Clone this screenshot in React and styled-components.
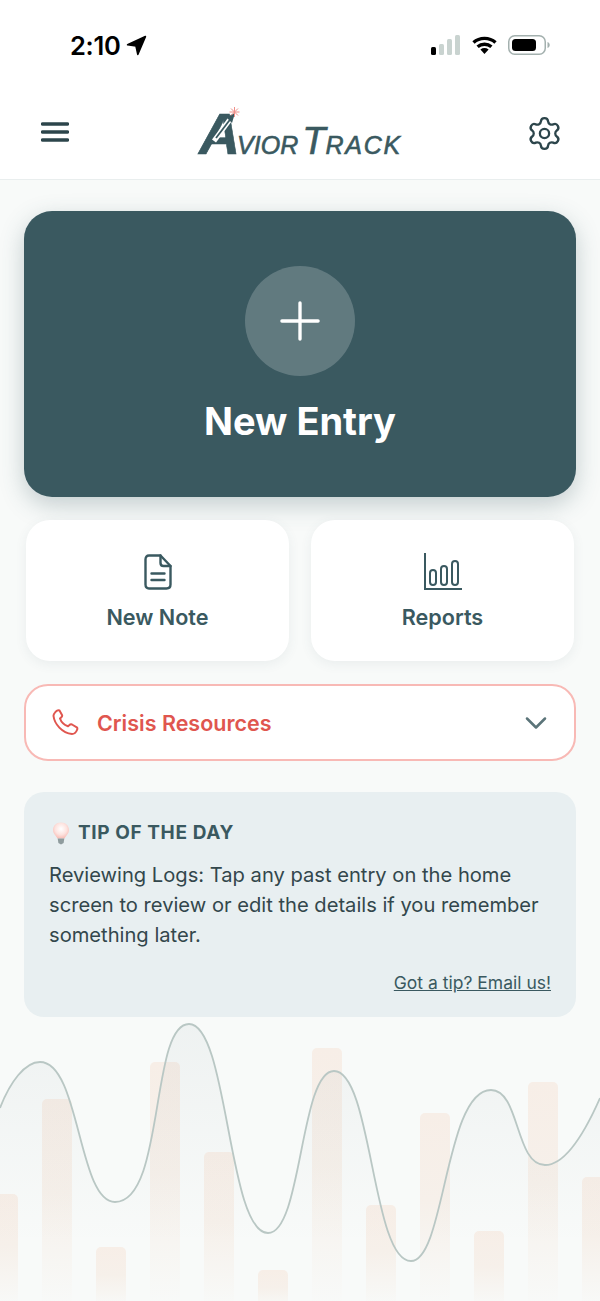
import styled, { createGlobalStyle } from 'styled-components'
import { Settings, Plus, ChevronDown } from 'lucide-react'

const ink = '#3a5960'
const inkDark = '#2c454b'
const coral = '#e0564f'

const GlobalStyle = createGlobalStyle`
  html, body {
    margin: 0;
    padding: 0;
    background: #f8faf9;
    font-family: Inter, "Liberation Sans", sans-serif;
  }
  * { box-sizing: border-box; }
`

const Page = styled.div`
  position: relative;
  width: 600px;
  height: 1301px;
  overflow: hidden;
  background: #f8faf9;
`

const TopArea = styled.div`
  background: #fff;
  border-bottom: 1px solid #e9eeee;
`

const StatusBar = styled.div`
  height: 90px;
  display: flex;
  align-items: center;
  justify-content: space-between;
  padding: 0 50px 0 70px;
`

const Time = styled.div`
  display: flex;
  align-items: center;
  gap: 6px;
  font-size: 25.5px;
  font-weight: 600;
  color: #000;
  letter-spacing: -0.3px;
`

const StatusIcons = styled.div`
  display: flex;
  align-items: center;
  gap: 11px;
`

const Header = styled.header`
  height: 89px;
  display: flex;
  align-items: flex-start;
  justify-content: space-between;
  padding: 18px 37px 0 41px;
`

const IconButton = styled.button`
  border: 0;
  padding: 0;
  background: none;
  color: ${inkDark};
  display: flex;
  margin-top: ${p => p.$top || 0}px;
`

const Logo = styled.div`
  position: relative;
  display: flex;
  align-items: baseline;
  height: 46px;
  margin: 3px 0 0 6px;
  font-family: "Liberation Sans", Arial, sans-serif;
  font-style: italic;
  color: ${ink};
  line-height: 46px;
  -webkit-text-stroke: 0.6px ${ink};
`

const LogoPart = styled.span`
  font-size: ${p => p.$size}px;
  font-weight: ${p => p.$weight || 400};
  letter-spacing: ${p => p.$spacing || 0}px;
  margin-left: ${p => p.$left || 0}px;
  margin-right: ${p => p.$gap || 0}px;
`

const LogoArrow = styled.svg`
  position: absolute;
  left: 0;
  top: 0;
  overflow: visible;
`

const Main = styled.main`
  position: relative;
  display: flex;
  flex-direction: column;
  padding: 31px 24px 0;
`

const Hero = styled.button`
  height: 286px;
  border: 0;
  border-radius: 28px;
  background: ${ink};
  color: #fff;
  display: flex;
  flex-direction: column;
  align-items: center;
  font-family: inherit;
  padding-top: 55px;
  box-shadow: 0 8px 24px rgba(59, 90, 97, 0.28);
`

const PlusCircle = styled.div`
  width: 110px;
  height: 110px;
  border-radius: 50%;
  background: rgba(255, 255, 255, 0.2);
  display: flex;
  align-items: center;
  justify-content: center;
`

const HeroLabel = styled.div`
  margin-top: 22px;
  font-size: 38px;
  line-height: 46px;
  font-weight: 700;
`

const TileRow = styled.div`
  display: grid;
  grid-template-columns: 1fr 1fr;
  gap: 22px;
  padding: 0 2px;
  margin-top: 23px;
`

const Tile = styled.button`
  height: 141px;
  border: 0;
  border-radius: 24px;
  background: #fff;
  color: ${ink};
  font-family: inherit;
  display: flex;
  flex-direction: column;
  align-items: center;
  padding-top: 33px;
  box-shadow: 0 3px 12px rgba(59, 90, 97, 0.08);
`

const TileIcon = styled.div`
  height: 37px;
  display: flex;
  align-items: center;
`

const TileLabel = styled.div`
  margin-top: 12px;
  font-size: 21.6px;
  line-height: 30px;
  font-weight: 600;
`

const Crisis = styled.button`
  height: 77px;
  margin-top: 23px;
  border: 2px solid #f8b9b5;
  border-radius: 24px;
  background: #fff;
  font-family: inherit;
  display: flex;
  align-items: center;
  padding: 0 20px 0 26px;
`

const CrisisLabel = styled.span`
  flex: 1;
  text-align: left;
  margin-left: 18px;
  font-size: 21.5px;
  font-weight: 600;
  color: ${coral};
`

const TipCard = styled.section`
  height: 225px;
  margin-top: 31px;
  padding: 29px 25px 0 25px;
  border-radius: 20px;
  background: #e8eff1;
`

const TipHeading = styled.div`
  display: flex;
  align-items: center;
  gap: 8px;
  padding-left: 3px;
  font-size: 19px;
  line-height: 24px;
  font-weight: 700;
  letter-spacing: 0.6px;
  color: ${ink};
`

const TipBody = styled.p`
  margin: 15px 0 0;
  font-size: 20.15px;
  line-height: 30px;
  color: #33474c;
`

const TipLink = styled.a`
  display: block;
  margin-top: 21px;
  text-align: right;
  font-size: 17.5px;
  line-height: 24px;
  color: ${ink};
  text-decoration: underline;
`

const Backdrop = styled.svg`
  position: absolute;
  left: 0;
  bottom: 0;
`

const bars = [
  [-12, 174], [42, 79], [96, 227], [150, 42], [204, 132], [258, 250],
  [312, 28], [366, 185], [420, 93], [474, 211], [528, 62], [582, 157],
]

const wave = 'M0 88C10 62 25 42 40 42C80 42 78 182 115 182C165 182 150 4 189 4C228 4 228 213 268 213C302 213 300 51 334 51C372 51 372 241 411 241C445 241 445 70 491 70C520 70 515 145 545 145C565 145 585 112 600 78'

function Chart() {
  return (
    <Backdrop width="600" height="281" viewBox="0 0 600 281" fill="none">
      <defs>
        <linearGradient id="barFade" x1="0" y1="0" x2="0" y2="1">
          <stop offset="0" stopColor="#f7eee7" />
          <stop offset="0.45" stopColor="#f6f0ea" />
          <stop offset="1" stopColor="#f8faf9" />
        </linearGradient>
        <linearGradient id="waveFade" x1="0" y1="0" x2="0" y2="1">
          <stop offset="0" stopColor="#3b5a61" stopOpacity="0.05" />
          <stop offset="0.8" stopColor="#3b5a61" stopOpacity="0" />
        </linearGradient>
      </defs>
      {bars.map(([x, y]) => (
        <rect key={x} x={x} y={y} width="30" height={281 - y + 8} rx="5" fill="url(#barFade)" />
      ))}
      <path d={`${wave}L600 281L0 281Z`} fill="url(#waveFade)" />
      <path d={wave} stroke="#b9c7c4" strokeWidth="1.8" />
    </Backdrop>
  )
}

function StatusIconSet() {
  return (
    <StatusIcons>
      <svg width="30" height="20" viewBox="0 0 30 20">
        <rect x="0" y="12" width="5" height="8" rx="1.5" fill="#000" />
        <rect x="8" y="9" width="5" height="11" rx="1.5" fill="#c9d3d0" />
        <rect x="16" y="4" width="5" height="16" rx="1.5" fill="#c9d3d0" />
        <rect x="24" y="0" width="5" height="20" rx="1.5" fill="#c9d3d0" />
      </svg>
      <svg width="25" height="18" viewBox="0 0 25 18" fill="none">
        <path d="M1.5 6.5C7.6 1 17.4 1 23.5 6.5" stroke="#000" strokeWidth="3.4" />
        <path d="M5.6 10.8C9.6 7.4 15.4 7.4 19.4 10.8" stroke="#000" strokeWidth="3.4" />
        <path d="M8.4 13.4C10.8 11.6 14.2 11.6 16.6 13.4L12.5 18Z" fill="#000" />
      </svg>
      <svg width="42" height="20" viewBox="0 0 42 20" fill="none">
        <rect x="0.75" y="0.75" width="36.5" height="18.5" rx="6" stroke="#a3b0ae" strokeWidth="1.5" />
        <rect x="4" y="4" width="24" height="12" rx="3.5" fill="#000" />
        <path d="M39.5 7C41 7.6 41.7 8.7 41.7 10C41.7 11.3 41 12.4 39.5 13Z" fill="#a3b0ae" />
      </svg>
    </StatusIcons>
  )
}

export default function App() {
  return (
    <Page>
      <GlobalStyle />
      <Chart />
      <TopArea>
        <StatusBar>
          <Time>
            2:10
            <svg width="21" height="21" viewBox="0 0 21 21">
              <path d="M19.4 1.6L1.6 9.8L10 11L11.8 19.4Z" fill="#000" stroke="#000" strokeWidth="1.6" strokeLinejoin="round" />
            </svg>
          </Time>
          <StatusIconSet />
        </StatusBar>
        <Header>
          <IconButton $top={14}>
            <svg width="28" height="20" viewBox="0 0 28 20">
              <path d="M1.5 2H26.5M1.5 10H26.5M1.5 18H26.5" stroke={inkDark} strokeWidth="3.4" strokeLinecap="round" />
            </svg>
          </IconButton>
          <Logo>
            <LogoPart $size={57} $weight={700} $gap={-3}>A</LogoPart>
            <LogoPart $size={25}>VIOR</LogoPart>
            <LogoPart $size={38} $left={4}>T</LogoPart>
            <LogoPart $size={25} $spacing={1.8}>RACK</LogoPart>
            <LogoArrow width="60" height="46" viewBox="0 0 60 46" fill="none">
              <path d="M15 30L32 7" stroke="#fff" strokeWidth="5" />
              <path d="M17 27L33 6" stroke={ink} strokeWidth="1.8" />
              <path d="M36 2L27 6L33 12Z" fill={ink} />
              <path d="M35.5 -4V6M30.5 1H40.5M32 -2.5L39 4.5M39 -2.5L32 4.5" stroke="#f0908a" strokeWidth="1" />
            </LogoArrow>
          </Logo>
          <IconButton $top={7}>
            <Settings size={37} strokeWidth={1.5} />
          </IconButton>
        </Header>
      </TopArea>
      <Main>
        <Hero>
          <PlusCircle>
            <Plus size={62} strokeWidth={1.3} />
          </PlusCircle>
          <HeroLabel>New Entry</HeroLabel>
        </Hero>
        <TileRow>
          <Tile>
            <TileIcon>
              <svg width="28" height="36" viewBox="0 0 28 36" fill="none" stroke={ink} strokeWidth="2.4" strokeLinejoin="round" strokeLinecap="round">
                <path d="M5 1.5H16.5L26.5 12V30.5C26.5 33 25 34.5 22.5 34.5H5C2.8 34.5 1.5 33 1.5 30.5V5.5C1.5 3 2.8 1.5 5 1.5Z" />
                <path d="M16.5 1.5V9C16.5 11 17.5 12 19.5 12H26.5" />
                <path d="M7.5 19.5H20.5M7.5 26H20.5" />
              </svg>
            </TileIcon>
            <TileLabel>New Note</TileLabel>
          </Tile>
          <Tile>
            <TileIcon>
              <svg width="38" height="37" viewBox="0 0 38 37" fill="none" stroke={ink} strokeWidth="2">
                <path d="M1 0V36H38" />
                <rect x="6" y="17" width="6" height="15" rx="3" />
                <rect x="17" y="13" width="6" height="19" rx="3" />
                <rect x="28" y="8" width="6" height="24" rx="3" />
              </svg>
            </TileIcon>
            <TileLabel>Reports</TileLabel>
          </Tile>
        </TileRow>
        <Crisis>
          <svg width="27" height="27" viewBox="0 0 27 27" fill="none">
            <path d="M3 3.5C4 2 6 0.8 7.5 1.5L10 6C10.5 7 9.8 8 9 8.6L8 9.5C9 12.5 12.5 16 16 17.3L17.2 16.2C18 15.4 19 15 20 15.5L24.8 18.3C25.6 18.9 25.4 20 25 21C24 23.5 22 25 20 25C10 24 2.5 15 1.5 7C1.4 5.8 2.2 4.5 3 3.5Z" stroke={coral} strokeWidth="2" strokeLinejoin="round" />
          </svg>
          <CrisisLabel>Crisis Resources</CrisisLabel>
          <ChevronDown size={36} strokeWidth={1.7} color="#5b7479" />
        </Crisis>
        <TipCard>
          <TipHeading>
            <svg width="18" height="23" viewBox="0 0 18 23">
              <defs>
                <radialGradient id="bulbGlow" cx="0.5" cy="0.4" r="0.6">
                  <stop offset="0" stopColor="#fff" />
                  <stop offset="0.6" stopColor="#fde3df" />
                  <stop offset="1" stopColor="#f8bdb6" />
                </radialGradient>
              </defs>
              <path d="M9 0.5C4.2 0.5 1 4 1 8C1 11.5 4 13.5 5.5 16.5H12.5C14 13.5 17 11.5 17 8C17 4 13.8 0.5 9 0.5Z" fill="url(#bulbGlow)" />
              <path d="M5.7 16.5H12.3L11.6 21L9 22.5L6.4 21Z" fill="#8f9c9e" />
            </svg>
            TIP OF THE DAY
          </TipHeading>
          <TipBody>
            Reviewing Logs: Tap any past entry on the home screen to review or edit the details if you remember something later.
          </TipBody>
          <TipLink>Got a tip? Email us!</TipLink>
        </TipCard>
      </Main>
    </Page>
  )
}
